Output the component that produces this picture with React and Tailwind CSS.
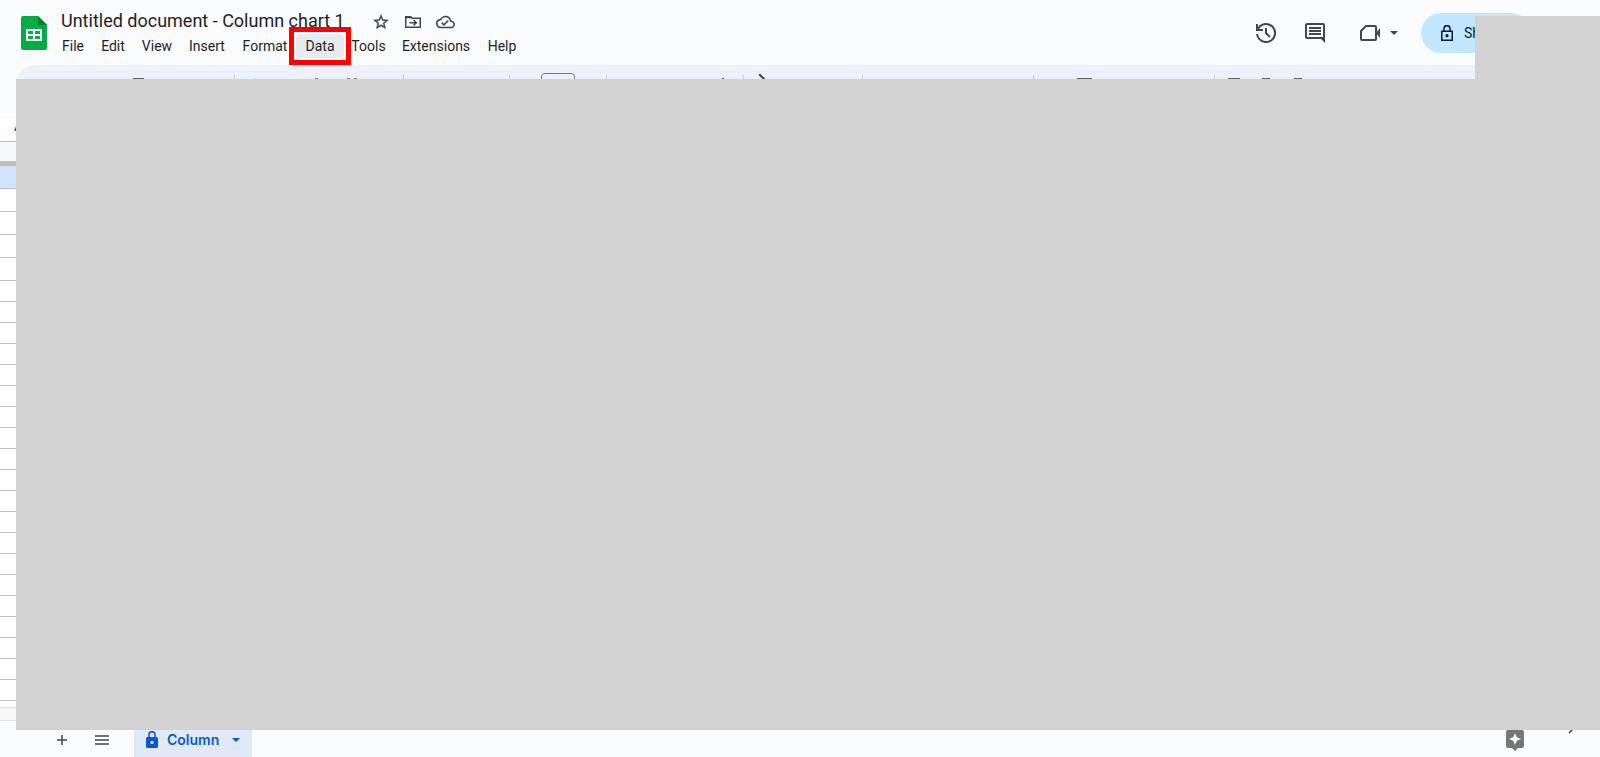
import React from "react";

const menus = [
  ["File", "w-[38px]"],
  ["Edit", "w-[42px]"],
  ["View", "w-[46px]"],
  ["Insert", "w-[54px]"],
  ["Format", "w-[62px]"],
  ["Data", "w-[48px]"],
  ["Tools", "w-[49px]"],
  ["Extensions", "w-[86px]"],
  ["Help", "w-[46px]"],
];

function SheetsLogo() {
  return (
    <svg width="26" height="34" viewBox="0 0 26 34" aria-hidden="true">
      <path d="M2 0H17l9 9v23a2 2 0 0 1-2 2H2a2 2 0 0 1-2-2V2a2 2 0 0 1 2-2z" fill="#00ac47" />
      <path d="M17 0l9 9h-9z" fill="#00832d" />
      <path fillRule="evenodd" d="M5 13h16v12H5zM7 15v3h5v-3zM14 15v3h5v-3zM7 20v3h5v-3zM14 20v3h5v-3z" fill="#fff" />
    </svg>
  );
}

function StarIcon() {
  return (
    <svg width="18" height="18" viewBox="0 0 24 24" fill="#444746" stroke="#444746" strokeWidth=".5" aria-hidden="true">
      <path d="M22 9.240l-7.190-.62L12 2 9.190 8.630 2 9.240l5.460 4.730L5.820 21 12 17.270 18.180 21l-1.630-7.030L22 9.240zM12 15.400l-3.760 2.270 1-4.280-3.320-2.880 4.380-.38L12 6.100l1.710 4.040 4.380.38-3.320 2.880 1 4.280L12 15.400z" />
    </svg>
  );
}

function MoveIcon() {
  return (
    <svg width="18" height="18" viewBox="0 0 18 18" fill="none" stroke="#444746" strokeWidth="1.500" aria-hidden="true">
      <path d="M1.750 3.750h5l1.500 1.500h8v9H1.750z" />
      <path d="M1.500 3.500h5.400l1.600 1.700h-7z" fill="#444746" stroke="none" />
      <path d="M5.500 9.700h6.500M9.600 7l2.700 2.700-2.700 2.700" />
    </svg>
  );
}

function CloudIcon() {
  return (
    <svg width="19" height="18" viewBox="0 2 24 20" fill="#444746" aria-hidden="true">
      <path d="M19.350 10.040A7.490 7.490 0 0 0 12 4C9.110 4 6.600 5.640 5.350 8.040A5.994 5.994 0 0 0 0 14c0 3.310 2.690 6 6 6h13c2.760 0 5-2.240 5-5 0-2.640-2.050-4.780-4.650-4.960zM19 18H6c-2.210 0-4-1.790-4-4 0-2.050 1.530-3.760 3.560-3.970l1.070-.11.500-.95A5.469 5.469 0 0 1 12 6c2.620 0 4.880 1.860 5.390 4.430l.3 1.500 1.530.11A2.980 2.980 0 0 1 22 15c0 1.650-1.350 3-3 3zm-9-3.820l-2.090-2.090L6.500 13.500 10 17l6.010-6.010-1.410-1.410z" />
    </svg>
  );
}

function HistoryIcon() {
  return (
    <svg width="20" height="20" viewBox="0 0 20 20" fill="none" stroke="#444746" strokeWidth="2" aria-hidden="true">
      <path d="M1.100 11A9 9 0 1 0 3 4.400L1.200 6.800" />
      <path d="M1 1v6h6M10 5v5.300l4 3.700" />
    </svg>
  );
}

function CommentIcon() {
  return (
    <svg width="20" height="20" viewBox="0 0 20 20" aria-hidden="true">
      <path fillRule="evenodd" d="M2 0h16a2 2 0 0 1 2 2v18l-4-4H2a2 2 0 0 1-2-2V2a2 2 0 0 1 2-2zM2 2v12h16V2z" fill="#444746" />
      <path d="M4 4h12v2H4zM4 7h12v2H4zM4 10h12v2H4z" fill="#444746" />
    </svg>
  );
}

function CameraIcon() {
  return (
    <svg width="20" height="16" viewBox="0 0 20 16" aria-hidden="true">
      <path d="M6 1h9a1 1 0 0 1 1 1v12a1 1 0 0 1-1 1H2a1 1 0 0 1-1-1V6z" fill="none" stroke="#444746" strokeWidth="2" strokeLinejoin="round" />
      <path d="M16 8l4-5v10z" fill="#444746" />
    </svg>
  );
}

function Caret({ className }) {
  return (
    <svg width="8" height="4" viewBox="0 0 8 4" className={className} aria-hidden="true">
      <path d="M0 0h8L4 4z" fill="currentColor" />
    </svg>
  );
}

function ToolGroup({ className, children }) {
  return <div className={`flex h-5 shrink-0 items-start border-l border-[#c7c7c7] ${className}`}>{children}</div>;
}

function Tool({ label, className }) {
  return (
    <button type="button" aria-label={label} className={`mt-[3px] h-[2px] shrink-0 ${className}`} />
  );
}

const tallRows = Array.from({ length: 4 });
const rows = Array.from({ length: 20 });

export default function App() {
  return (
    <div className="relative flex min-h-screen flex-col overflow-hidden bg-white font-['Roboto',sans-serif] text-[#1f1f1f]">
      <header className="flex h-[65px] shrink-0 justify-between bg-[#f9fbfd]">
        <div className="flex">
          <div className="pt-4 pl-[21px]">
            <SheetsLogo />
          </div>
          <div className="flex flex-col pl-[7px]">
            <div className="flex h-[34px] items-center gap-[11px] pt-2 pl-[7px]">
              <h1 className="w-[300px] text-[18px] leading-6 whitespace-nowrap">Untitled document - Column chart 1</h1>
              <div className="flex items-center gap-[14px] pt-px">
                <button type="button" aria-label="Star"><StarIcon /></button>
                <button type="button" aria-label="Move"><MoveIcon /></button>
                <button type="button" aria-label="Document status"><CloudIcon /></button>
              </div>
            </div>
            <nav className="flex h-6">
              {menus.map(([name, width]) => (
                <div key={name} className={`relative shrink-0 ${width}`}>
                  <button
                    type="button"
                    className={`h-6 w-full rounded text-center text-[14px] leading-6 ${name === "Data" ? "bg-[#e8ebee]" : ""}`}
                  >
                    {name}
                  </button>
                  {name === "Data" && (
                    <span className="pointer-events-none absolute -inset-x-[7px] -inset-y-[7px] border-[5px] border-[#ff0000]" />
                  )}
                </div>
              ))}
            </nav>
          </div>
        </div>
        <div className="flex h-[66px] items-center pr-[69px] text-[#444746]">
          <button type="button" aria-label="Version history"><HistoryIcon /></button>
          <button type="button" aria-label="Comments" className="ml-[29px]"><CommentIcon /></button>
          <button type="button" aria-label="Join a call" className="ml-[35px] flex items-center gap-[10px]">
            <CameraIcon />
            <Caret />
          </button>
          <button
            type="button"
            className="ml-[23px] flex h-10 w-[110px] items-center gap-[11px] rounded-full bg-[#c2e7ff] pl-5 text-[14px] text-[#001d35]"
          >
            <svg width="12" height="17" viewBox="0 0 12 17" aria-hidden="true">
              <path d="M.75 6.250h10.500v9H.75zM3 6V3.700a3 3 0 0 1 6 0V6" fill="none" stroke="currentColor" strokeWidth="1.500" />
              <circle cx="6" cy="10.700" r="1.600" fill="currentColor" />
            </svg>
            Share
          </button>
        </div>
      </header>

      <div className="h-12 shrink-0 bg-[#f9fbfd] px-4">
        <div className="flex h-10 items-start overflow-hidden rounded-full bg-[#edf2fa] pt-[10px]">
          <div className="flex w-[218px] shrink-0 pl-[117px]">
            <Tool label="Print" className="w-[11px] bg-[#5f6165]" />
          </div>
          <ToolGroup className="w-[169px]">
            <Tool label="Currency" className="ml-[19px] w-px bg-[#a8c0e8]" />
            <Tool label="Decrease decimals" className="ml-[60px] w-[3px] bg-[#808285]" />
            <Tool label="Increase decimals" className="ml-[29px] w-[3px] bg-[#808285]" />
            <Tool label="More formats" className="ml-1 w-[3px] bg-[#808285]" />
          </ToolGroup>
          <ToolGroup className="w-[106px]" />
          <ToolGroup className="w-[97px]">
            <input aria-label="Font size" className="-mt-[2px] ml-[31px] h-6 w-[34px] rounded border border-[#747775]" />
          </ToolGroup>
          <ToolGroup className="w-[137px]">
            <Tool label="Text color" className="ml-[115px] w-[2px] bg-[#5f6165]" />
          </ToolGroup>
          <ToolGroup className="w-[119px]">
            <svg width="10" height="10" viewBox="0 0 10 10" className="ml-[15px] -mt-px" aria-hidden="true">
              <path d="M0 0l7 7" stroke="#444746" strokeWidth="2" />
            </svg>
          </ToolGroup>
          <ToolGroup className="w-[171px]" />
          <ToolGroup className="w-[181px]">
            <Tool label="Align" className="ml-[43px] w-[15px] bg-[#5f6165]" />
          </ToolGroup>
          <ToolGroup className="w-[150px]">
            <Tool label="Link" className="ml-[13px] w-3 bg-[#5f6165]" />
            <Tool label="Comment" className="ml-[22px] w-2 bg-[#5f6165]" />
            <Tool label="Chart" className="ml-6 w-2 bg-[#5f6165]" />
          </ToolGroup>
        </div>
      </div>

      <div className="flex h-[29px] shrink-0 items-center border-b border-[#c0c0c0] pl-[14px] text-[13px]">A1</div>

      <main className="flex flex-1 flex-col">
        <div className="h-[19px] bg-[#f8f9fa]" />
        <div className="h-[5px] bg-[#c0c0c0]" />
        <div className="h-[23px] border-b border-[#c0c0c0] bg-[#d3e3fd]" />
        {tallRows.map((_, i) => (
          <div key={i} className="h-[23px] border-b border-[#c0c0c0]" />
        ))}
        {rows.map((_, i) => (
          <div key={i} className="h-[21px] border-b border-[#c0c0c0]" />
        ))}
        <div className="h-[6px]" />
        <div className="h-[14px] border-y border-[#e1e1e1] bg-[#f8f8f8]" />
      </main>

      <footer className="flex h-9 shrink-0 items-center justify-between bg-[#f9fbfd] text-[#444746]">
        <div className="flex h-full items-center">
          <button type="button" aria-label="Add sheet" className="ml-[57px] pt-[2px]">
            <svg width="10" height="10" viewBox="0 0 10 10" aria-hidden="true">
              <path d="M5 0v10M0 5h10" stroke="currentColor" strokeWidth="1.500" />
            </svg>
          </button>
          <button type="button" aria-label="All sheets" className="ml-7 pt-[2px]">
            <svg width="14" height="10" viewBox="0 0 14 10" aria-hidden="true">
              <path d="M0 1h14M0 5h14M0 9h14" stroke="currentColor" strokeWidth="1.700" />
            </svg>
          </button>
          <button
            type="button"
            className="ml-[25px] flex h-full w-[118px] items-center bg-[#e1e9f7] pt-px pl-3 text-[14px] text-[#0b57d0]"
          >
            <svg width="12" height="17" viewBox="0 0 12 17" aria-hidden="true">
              <path d="M3 7V3.700a3 3 0 0 1 6 0V7" fill="none" stroke="currentColor" strokeWidth="1.500" />
              <path fillRule="evenodd" d="M1.500 6h9A1.500 1.500 0 0 1 12 7.500v8a1.500 1.500 0 0 1-1.500 1.500h-9A1.500 1.500 0 0 1 0 15.500v-8A1.500 1.500 0 0 1 1.500 6zM6 9.800a1.600 1.600 0 1 0 0 3.200 1.600 1.600 0 0 0 0-3.200z" fill="currentColor" />
            </svg>
            <span className="ml-[9px] w-[65px] text-left font-['Inter',sans-serif] font-semibold">Column</span>
            <Caret />
          </button>
        </div>
        <div className="flex h-full items-start pr-[25px]">
          <button type="button" aria-label="Explore" className="mt-[9px]">
            <svg width="18" height="21" viewBox="0 0 18 21" aria-hidden="true">
              <path d="M2 0h14a2 2 0 0 1 2 2v14a2 2 0 0 1-2 2h-4l-3 3-3-3H2a2 2 0 0 1-2-2V2a2 2 0 0 1 2-2z" fill="#747775" />
              <path d="M9 3l1.700 4.300L15 9l-4.300 1.700L9 15l-1.700-4.300L3 9l4.300-1.700z" fill="#fff" />
            </svg>
          </button>
          <button type="button" aria-label="Show side panel" className="mt-px ml-[44px]">
            <svg width="7" height="12" viewBox="0 0 7 12" aria-hidden="true">
              <path d="M1 1l5 5-5 5" fill="none" stroke="currentColor" strokeWidth="1.500" />
            </svg>
          </button>
        </div>
      </footer>

      <div className="absolute top-[79px] right-0 bottom-[27px] left-4 bg-[#d2d2d2]" />
      <div className="absolute top-4 right-0 h-[63px] w-[125px] bg-[#d2d2d2]" />
    </div>
  );
}
